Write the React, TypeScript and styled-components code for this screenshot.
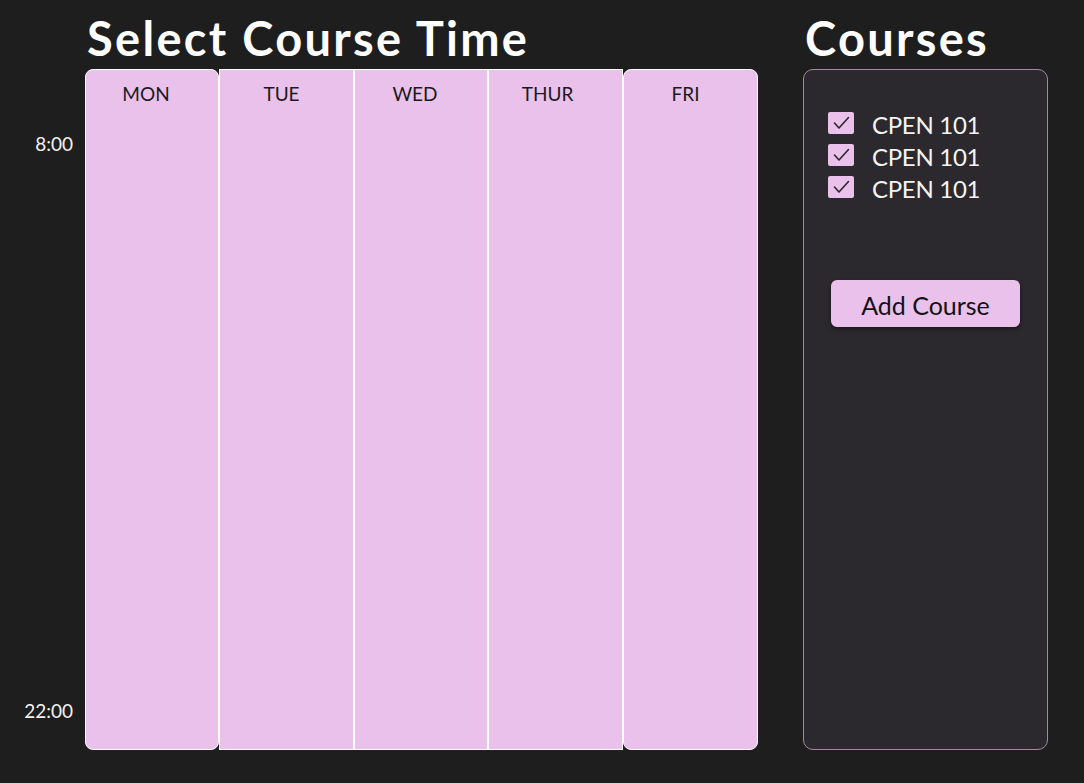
import React from "react";
import styled, { createGlobalStyle } from "styled-components";

const GlobalStyle = createGlobalStyle`
  html, body {
    margin: 0;
    padding: 0;
    background: #1e1e1e;
    font-family: Lato, "Noto Sans", sans-serif;
  }
  * { box-sizing: border-box; }
`;

const PINK = "#e9c1ea";

const Page = styled.div`
  display: flex;
  align-items: flex-start;
  gap: 45px;
  width: 1084px;
  height: 783px;
  background: #1e1e1e;
`;

const Left = styled.section`
  display: grid;
  grid-template-columns: 85px 673px;
  row-gap: 3px;
`;

const Right = styled.section`
  display: flex;
  flex-direction: column;
  width: 245px;
  gap: 4px;
`;

const Title = styled.h1<{ $indent?: number }>`
  margin: 10px 0 0 ${(p) => p.$indent ?? 0}px;
  font-family: Lato, "Noto Sans", sans-serif;
  font-weight: 700;
  font-size: 47px;
  line-height: 56px;
  color: #ffffff;
  letter-spacing: 2.3px;
  white-space: nowrap;
  grid-column: 2;
`;

const TimeColumn = styled.div`
  grid-column: 1;
  display: flex;
  flex-direction: column;
  justify-content: space-between;
  align-items: flex-end;
  padding: 64px 12px 28px 0;
  height: 681px;
`;

const TimeLabel = styled.span`
  font-size: 19px;
  line-height: 22px;
  color: #f2f2f2;
`;

const Schedule = styled.div`
  grid-column: 2;
  display: flex;
  height: 681px;
`;

const DayColumn = styled.div<{ $w: number; $round?: boolean }>`
  width: ${(p) => p.$w}px;
  flex: none;
  height: 100%;
  background: ${PINK};
  border: 1.5px solid #ffffff;
  border-radius: ${(p) => (p.$round ? "8px" : "0")};
  display: flex;
  justify-content: center;
  padding-top: 13px;
`;

const DayLabel = styled.span<{ $shift: number }>`
  font-size: 19px;
  line-height: 22px;
  color: #1c1a1d;
  transform: translateX(${(p) => -p.$shift}px);
`;

const Panel = styled.div`
  height: 681px;
  margin-top: -1px;
  background: #2c292e;
  border: 1px solid #a487a6;
  border-radius: 10px;
  padding: 37px 24px 0 24px;
  display: flex;
  flex-direction: column;
`;

const CourseList = styled.ul`
  list-style: none;
  margin: 0;
  padding: 0;
  display: flex;
  flex-direction: column;
`;

const CourseRow = styled.li`
  display: flex;
  align-items: center;
  gap: 18px;
  height: 32px;
`;

const Check = styled.span`
  width: 26px;
  height: 22px;
  border-radius: 2px;
  background: ${PINK};
  display: flex;
  align-items: center;
  justify-content: center;
  flex: none;
`;

const CourseName = styled.span`
  font-size: 24px;
  line-height: 28px;
  padding-top: 4px;
  color: #f4f4f4;
  letter-spacing: -0.3px;
`;

const AddButton = styled.button`
  align-self: center;
  margin-top: 77px;
  width: 189px;
  height: 47px;
  border: none;
  border-radius: 6px;
  background: ${PINK};
  color: #141214;
  font-family: Lato, "Noto Sans", sans-serif;
  font-size: 25px;
  padding: 2px 0 0;
  box-shadow: 0 2px 4px rgba(0, 0, 0, 0.45);
  cursor: pointer;
`;

const days = [
  { name: "MON", w: 134, round: true, shift: 6 },
  { name: "TUE", w: 135, round: false, shift: 5 },
  { name: "WED", w: 134, round: false, shift: 6 },
  { name: "THUR", w: 135, round: false, shift: 8 },
  { name: "FRI", w: 135, round: true, shift: 5 },
];

const CheckIcon = () => (
  <svg width="17" height="14" viewBox="0 0 17 14" fill="none">
    <polyline
      points="1.5,7 6,12 15.5,1.5"
      stroke="#2a262b"
      strokeWidth="1.6"
      strokeLinecap="round"
      strokeLinejoin="round"
    />
  </svg>
);

export default function App() {
  return (
    <>
      <GlobalStyle />
      <Page>
        <Left>
          <Title $indent={2}>Select Course Time</Title>
          <TimeColumn>
            <TimeLabel>8:00</TimeLabel>
            <TimeLabel>22:00</TimeLabel>
          </TimeColumn>
          <Schedule>
            {days.map((d) => (
              <DayColumn key={d.name} $w={d.w} $round={d.round}>
                <DayLabel $shift={d.shift}>{d.name}</DayLabel>
              </DayColumn>
            ))}
          </Schedule>
        </Left>
        <Right>
          <Title $indent={2}>Courses</Title>
          <Panel>
            <CourseList>
              {[0, 1, 2].map((i) => (
                <CourseRow key={i}>
                  <Check>
                    <CheckIcon />
                  </Check>
                  <CourseName>CPEN 101</CourseName>
                </CourseRow>
              ))}
            </CourseList>
            <AddButton>Add Course</AddButton>
          </Panel>
        </Right>
      </Page>
    </>
  );
}
